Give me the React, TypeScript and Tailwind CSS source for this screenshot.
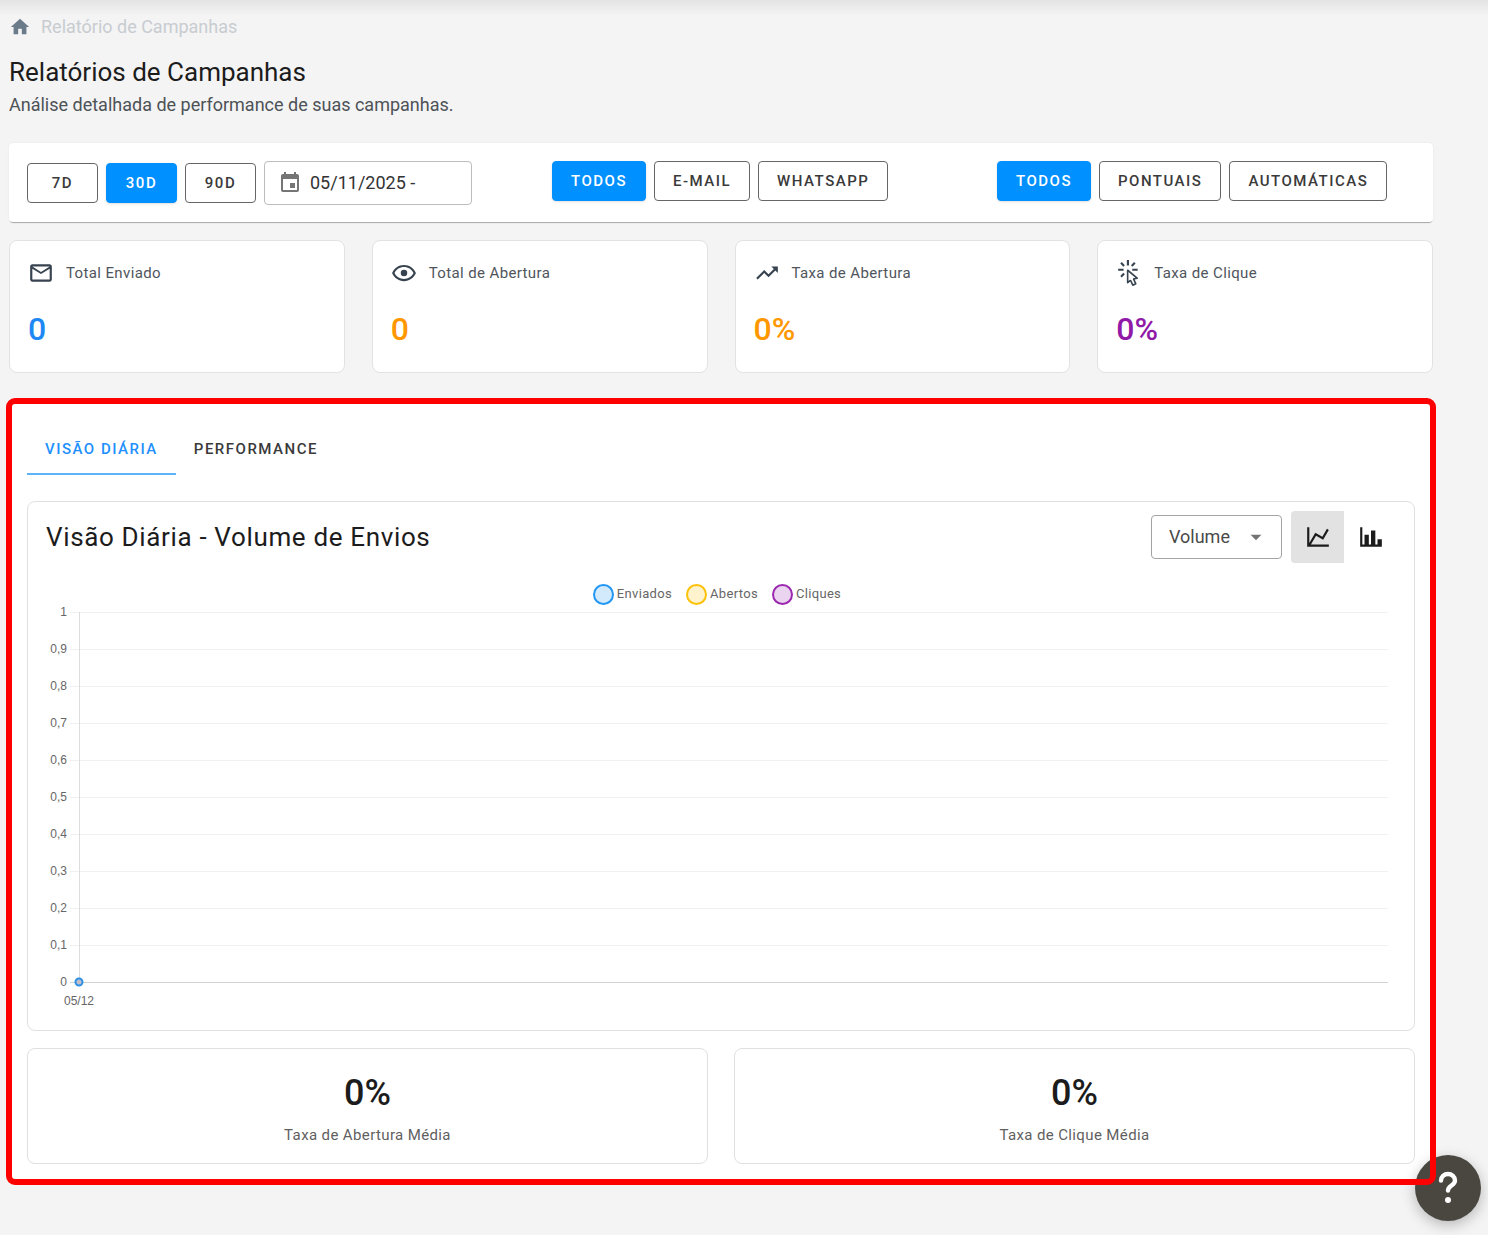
import React from "react";

const ICONS = {
  home: "M10,20V14H14V20H19V12H22L12,3L2,12H5V20H10Z",
  calendar:
    "M19,19H5V8H19M16,1V3H8V1H6V3H5C3.89,3 3,3.89 3,5V19A2,2 0 0,0 5,21H19A2,2 0 0,0 21,19V5C21,3.89 20.1,3 19,3H18V1M17,12H12V17H17V12Z",
  email:
    "M22 6C22 4.9 21.1 4 20 4H4C2.9 4 2 4.9 2 6V18C2 19.1 2.9 20 4 20H20C21.1 20 22 19.1 22 18V6M20 6L12 11L4 6H20M20 18H4V8L12 13L20 8V18Z",
  eye: "M12,9A3,3 0 0,1 15,12A3,3 0 0,1 12,15A3,3 0 0,1 9,12A3,3 0 0,1 12,9M12,4.5C17,4.5 21.27,7.61 23,12C21.27,16.39 17,19.5 12,19.5C7,19.5 2.73,16.39 1,12C2.73,7.61 7,4.5 12,4.5M3.18,12C4.83,15.36 8.24,17.5 12,17.5C15.76,17.5 19.17,15.36 20.82,12C19.17,8.64 15.76,6.5 12,6.5C8.24,6.5 4.83,8.64 3.18,12Z",
  trending:
    "M16,6L18.29,8.29L13.41,13.17L9.41,9.17L2,16.59L3.41,18L9.41,12L13.41,16L19.71,9.71L22,12V6H16Z",
  click:
    "M11.5,11L17.88,16.37L17,16.55L16.36,16.67C15.73,16.8 15.37,17.5 15.65,18.07L15.92,18.65L17.28,21.59L15.86,22.25L14.5,19.32L14.24,18.74C13.97,18.15 13.22,17.97 12.72,18.38L12.21,18.78L11.5,19.35V11M10.76,8.69A0.76,0.76 0 0,0 10,9.45V20.9C10,21.32 10.34,21.66 10.76,21.66C10.95,21.66 11.11,21.6 11.24,21.5L13.15,19.95L14.81,23.57C14.94,23.84 15.21,24 15.5,24C15.61,24 15.72,24 15.83,23.92L18.59,22.64C18.97,22.46 19.15,22 18.95,21.63L17.28,18L19.69,17.55C19.85,17.5 20,17.43 20.12,17.29C20.39,16.97 20.35,16.5 20,16.21L11.26,8.86L11.25,8.87C11.12,8.76 10.95,8.69 10.76,8.69M15,10V8H20V10H15M13.83,4.76L16.66,1.93L18.07,3.34L15.24,6.17L13.83,4.76M10,0H12V5H10V0M3.93,14.66L6.76,11.83L8.17,13.24L5.34,16.07L3.93,14.66M3.93,3.34L5.34,1.93L8.17,4.76L6.76,6.17L3.93,3.34M7,10H2V8H7V10",
  line: "M16,11.78L20.24,4.45L21.97,5.45L16.74,14.5L10.23,10.75L5.46,19H22V21H2V3H4V17.54L9.5,8L16,11.78Z",
  bar: "M22,21H2V3H4V19H6V10H10V19H12V6H16V19H18V14H22V21Z",
  down: "M7,10L12,15L17,10H7Z",
};

function Icon({ name, className }: { name: keyof typeof ICONS; className: string }) {
  return (
    <svg viewBox="0 0 24 24" fill="currentColor" className={`shrink-0 ${className}`} aria-hidden="true">
      <path d={ICONS[name]} />
    </svg>
  );
}

function FilterButton({ label, active }: { label: string; active?: boolean }) {
  return (
    <button
      type="button"
      aria-pressed={!!active}
      className={`h-10 rounded border px-[18px] text-[15px] font-medium uppercase tracking-widest ${
        active
          ? "border-[#0090ff] bg-[#0090ff] text-white shadow"
          : "border-[#666666] bg-white text-[#3a3a3a]"
      }`}
    >
      {label}
    </button>
  );
}

const STATS: { icon: keyof typeof ICONS; label: string; value: string; color: string }[] = [
  { icon: "email", label: "Total Enviado", value: "0", color: "text-[#1e88f5]" },
  { icon: "eye", label: "Total de Abertura", value: "0", color: "text-[#ff9800]" },
  { icon: "trending", label: "Taxa de Abertura", value: "0%", color: "text-[#ff9800]" },
  { icon: "click", label: "Taxa de Clique", value: "0%", color: "text-[#9119a8]" },
];

const LEGEND = [
  { label: "Enviados", swatch: "border-[#2196f3] bg-[#d3eafd]" },
  { label: "Abertos", swatch: "border-[#ffc107] bg-[#fff3cd]" },
  { label: "Cliques", swatch: "border-[#9c27b0] bg-[#ebd4ef]" },
];

const TICKS = ["1", "0,9", "0,8", "0,7", "0,6", "0,5", "0,4", "0,3", "0,2", "0,1", "0"];

function Chart() {
  return (
    <svg className="block h-[408px] w-full" role="img" aria-label="Volume de envios por dia">
      {TICKS.map((tick, i) => {
        const y = 7 + i * 37;
        const last = i === TICKS.length - 1;
        return (
          <g key={tick}>
            <rect x={24} y={y} width="100%" height={1} fill={last ? "#d2d2d2" : "#f0f0f0"} />
            <text x={21} y={y + 4} textAnchor="end" className="fill-[#666666] font-['Liberation_Sans',Arial,sans-serif] text-xs">
              {tick}
            </text>
          </g>
        );
      })}
      <rect x={33} y={7} width={1} height={370} fill="#dcdcdc" />
      <circle cx={33} cy={377} r={3.5} fill="#c3bfc8" stroke="#2b90e6" strokeWidth={2} />
      <text x={33} y={400} textAnchor="middle" className="fill-[#666666] font-['Liberation_Sans',Arial,sans-serif] text-xs">
        05/12
      </text>
    </svg>
  );
}

export default function App() {
  return (
    <div className="min-h-screen bg-[#f4f4f4] font-['Roboto',sans-serif] text-[#1c1c1c]">
      <div className="h-4 bg-linear-to-b from-[#e4e4e4] to-[#f4f4f4]" />
      <main className="pr-[55px] pb-[52px] pl-[9px]">
        <nav aria-label="Trilha" className="flex h-[22px] items-center gap-2.5">
          <a href="#" aria-label="Início" className="text-[#6b7b8a]">
            <Icon name="home" className="size-[22px]" />
          </a>
          <span className="text-lg leading-[22px] text-[#c8ccd1]">Relatório de Campanhas</span>
        </nav>
        <h1 className="mt-[18px] text-[26px] leading-8">Relatórios de Campanhas</h1>
        <p className="mt-[5px] text-lg leading-6 text-[#4d5257]">
          Análise detalhada de performance de suas campanhas.
        </p>

        <section
          aria-label="Filtros"
          className="mt-[26px] grid grid-cols-[525fr_445fr_418fr] items-start rounded bg-white px-[18px] pt-[18px] pb-[17px] shadow-[0_2px_1px_-1px_rgba(0,0,0,0.3),0_0_2px_rgba(0,0,0,0.08)]"
        >
          <div className="flex items-center gap-2">
            <div className="grid grid-cols-3 gap-2 [&>button]:w-[71px] [&>button]:px-0">
              <FilterButton label="7D" />
              <FilterButton label="30D" active />
              <FilterButton label="90D" />
            </div>
            <label className="flex h-11 w-52 items-center gap-2 rounded border border-[#bdbdbd] px-[13px] text-[#757575]">
              <Icon name="calendar" className="size-6" />
              <input
                aria-label="Período"
                defaultValue="05/11/2025 -"
                className="w-full min-w-0 text-lg text-[#333333] outline-none"
              />
            </label>
          </div>
          <div className="flex gap-2">
            <FilterButton label="Todos" active />
            <FilterButton label="E-mail" />
            <FilterButton label="WhatsApp" />
          </div>
          <div className="flex gap-2">
            <FilterButton label="Todos" active />
            <FilterButton label="Pontuais" />
            <FilterButton label="Automáticas" />
          </div>
        </section>

        <section aria-label="Resumo" className="mt-[18px] grid grid-cols-4 gap-[27px]">
          {STATS.map((s) => (
            <article key={s.label} className="h-[133px] rounded-lg border border-[#e2e2e2] bg-white px-[18px] pt-[19px]">
              <div className="flex h-[26px] items-center gap-3 text-[#37434f]">
                <Icon name={s.icon} className="size-[26px]" />
                <h2 className="text-[15px] tracking-wide text-[#4f555c]">{s.label}</h2>
              </div>
              <p className={`mt-[23px] text-[32px] leading-10 font-medium ${s.color}`}>{s.value}</p>
            </article>
          ))}
        </section>

        <section aria-label="Visão Diária" className="relative mt-7 bg-white px-[18px] pt-[22px] pb-[18px]">
          <div className="pointer-events-none absolute -inset-[3px] z-20 rounded-[9px] border-6 border-[#ff0000]" />
          <div role="tablist" className="flex h-[52px]">
            <button
              type="button"
              role="tab"
              aria-selected="true"
              className="border-b-2 border-[#5cb3f8] px-[18px] pt-0.5 text-[15px] font-medium tracking-widest text-[#1e90ff] uppercase"
            >
              Visão Diária
            </button>
            <button
              type="button"
              role="tab"
              aria-selected="false"
              className="border-b-2 border-transparent px-[18px] pt-0.5 text-[15px] font-medium tracking-widest text-[#3a3a3a] uppercase"
            >
              Performance
            </button>
          </div>

          <div className="mt-[26px] h-[530px] rounded-lg border border-[#e0e0e0] pt-[9px] pr-[26px] pl-[18px]">
            <div className="flex h-[52px] items-center">
              <h2 className="flex-1 text-[26px] leading-8 tracking-wide">Visão Diária - Volume de Envios</h2>
              <div className="relative mr-[9px] w-[131px]">
                <select
                  aria-label="Métrica"
                  className="h-11 w-full appearance-none rounded border border-[#a3a3a3] bg-white pl-[17px] text-lg text-[#4a4a4a]"
                >
                  <option>Volume</option>
                </select>
                <Icon name="down" className="pointer-events-none absolute top-[9px] right-[13px] size-[26px] text-[#757575]" />
              </div>
              <div className="-mr-[9px] flex">
                <button type="button" aria-label="Linhas" aria-pressed="true" className="flex h-[52px] w-[53px] items-center justify-center rounded-l bg-[#e2e2e2]">
                  <Icon name="line" className="size-[26px]" />
                </button>
                <button type="button" aria-label="Barras" aria-pressed="false" className="flex h-[52px] w-[53px] items-center justify-center">
                  <Icon name="bar" className="size-[26px]" />
                </button>
              </div>
            </div>
            <ul className="mt-5 flex h-[22px] justify-center gap-3.5">
              {LEGEND.map((l) => (
                <li key={l.label} className="flex items-center gap-[3px] text-[13px] tracking-wide text-[#666666]">
                  <span className={`size-[21px] rounded-full border-2 ${l.swatch}`} />
                  {l.label}
                </li>
              ))}
            </ul>
            <Chart />
          </div>

          <div className="mt-[17px] grid grid-cols-2 gap-[26px]">
            {["Taxa de Abertura Média", "Taxa de Clique Média"].map((label) => (
              <article key={label} className="h-[116px] rounded-lg border border-[#e0e0e0] pt-6 text-center">
                <p className="text-4xl leading-10 font-medium">0%</p>
                <p className="mt-2.5 text-[15px] leading-6 tracking-wide text-[#5f5f5f]">{label}</p>
              </article>
            ))}
          </div>
        </section>
      </main>

      <button
        type="button"
        aria-label="Ajuda"
        className="fixed right-[7px] bottom-[14px] z-10 flex size-[66px] items-center justify-center rounded-full bg-[#4a4640] shadow-[0_4px_14px_rgba(0,0,0,0.25)]"
      >
        <svg viewBox="0 0 24 36" className="h-9 w-6" fill="none" aria-hidden="true">
          <path d="M5 10.500A7 6.500 0 0 1 19 10.500C19 15.500 12 15.500 12 20.500" stroke="white" strokeWidth="4.400" strokeLinecap="round" />
          <circle cx="12" cy="30" r="3" fill="white" />
        </svg>
      </button>
    </div>
  );
}
